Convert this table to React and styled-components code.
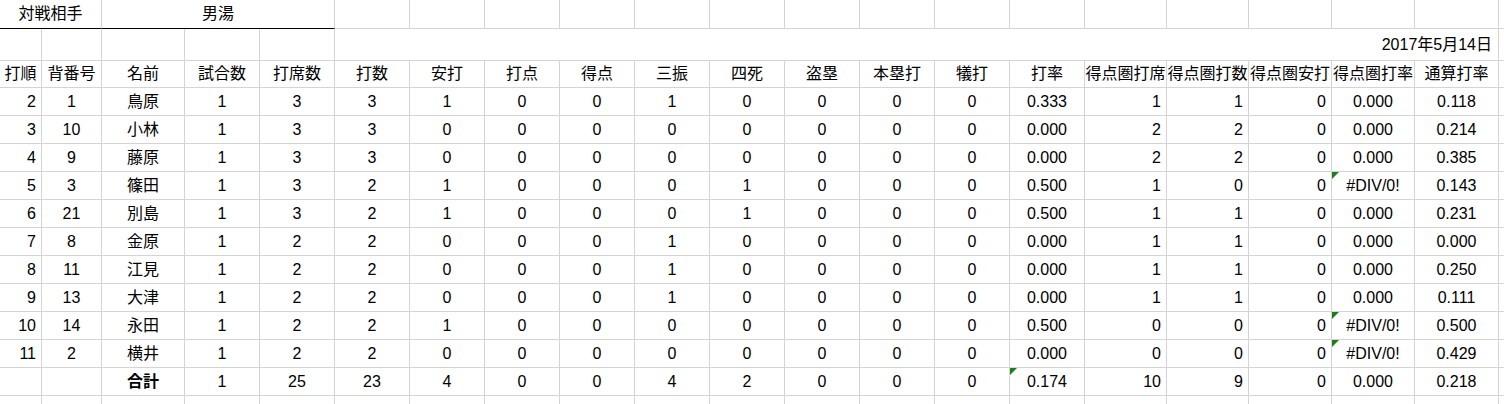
import React from "react";
import styled, { createGlobalStyle } from "styled-components";

const GlobalStyle = createGlobalStyle`
  html, body {
    margin: 0;
    padding: 0;
    background: #ffffff;
    overflow: hidden;
  }
  body {
    font-family: "Liberation Sans", "Noto Sans CJK JP", sans-serif;
    color: #000000;
  }
`;

const GRID = "#d4d4d4";

const Sheet = styled.div`
  display: grid;
  grid-template-columns: 42px 60px 83px repeat(12, 75px) 82px 82px 83px 83px 84px 1fr;
  grid-template-rows: 29px 32px 27px repeat(11, 28px) 20px;
  width: 1504px;
  height: 404px;
  overflow: hidden;
  font-size: 16px;
`;

const Cell = styled.div`
  position: relative;
  display: flex;
  align-items: center;
  justify-content: ${(p) =>
    p.$align === "right" ? "flex-end" : p.$align === "left" ? "flex-start" : "center"};
  padding: ${(p) => (p.$align === "right" ? "0 5px 0 0" : "0")};
  grid-column: ${(p) => (p.$span ? `span ${p.$span}` : "auto")};
  border-right: ${(p) => (p.$noRight ? "none" : `1px solid ${GRID}`)};
  border-bottom: 1px solid ${(p) => (p.$dark ? "#000000" : GRID)};
  border-bottom-width: ${(p) => (p.$noBottom ? "0" : "1px")};
  font-weight: ${(p) => (p.$bold ? 700 : 400)};
  white-space: nowrap;
  overflow: visible;
  box-sizing: border-box;
  line-height: 1;
`;

const DateText = styled.span`
  padding-right: 1px;
`;

const Flag = styled.span`
  position: absolute;
  top: 0;
  left: 0;
  width: 0;
  height: 0;
  border-top: 7px solid #1a7f1a;
  border-right: 7px solid transparent;
`;

const headers = [
  "打順", "背番号", "名前", "試合数", "打席数", "打数", "安打", "打点", "得点", "三振",
  "四死", "盗塁", "本塁打", "犠打", "打率", "得点圏打席", "得点圏打数", "得点圏安打",
  "得点圏打率", "通算打率",
];

const aligns = [
  "right", "center", "center", "center", "center", "center", "center", "center",
  "center", "center", "center", "center", "center", "center", "center",
  "right", "right", "right", "center", "center",
];

const rows = [
  ["2", "1", "鳥原", "1", "3", "3", "1", "0", "0", "1", "0", "0", "0", "0", "0.333", "1", "1", "0", "0.000", "0.118"],
  ["3", "10", "小林", "1", "3", "3", "0", "0", "0", "0", "0", "0", "0", "0", "0.000", "2", "2", "0", "0.000", "0.214"],
  ["4", "9", "藤原", "1", "3", "3", "0", "0", "0", "0", "0", "0", "0", "0", "0.000", "2", "2", "0", "0.000", "0.385"],
  ["5", "3", "篠田", "1", "3", "2", "1", "0", "0", "0", "1", "0", "0", "0", "0.500", "1", "0", "0", "#DIV/0!", "0.143"],
  ["6", "21", "別島", "1", "3", "2", "1", "0", "0", "0", "1", "0", "0", "0", "0.500", "1", "1", "0", "0.000", "0.231"],
  ["7", "8", "金原", "1", "2", "2", "0", "0", "0", "1", "0", "0", "0", "0", "0.000", "1", "1", "0", "0.000", "0.000"],
  ["8", "11", "江見", "1", "2", "2", "0", "0", "0", "1", "0", "0", "0", "0", "0.000", "1", "1", "0", "0.000", "0.250"],
  ["9", "13", "大津", "1", "2", "2", "0", "0", "0", "1", "0", "0", "0", "0", "0.000", "1", "1", "0", "0.000", "0.111"],
  ["10", "14", "永田", "1", "2", "2", "1", "0", "0", "0", "0", "0", "0", "0", "0.500", "0", "0", "0", "#DIV/0!", "0.500"],
  ["11", "2", "横井", "1", "2", "2", "0", "0", "0", "0", "0", "0", "0", "0", "0.000", "0", "0", "0", "#DIV/0!", "0.429"],
  ["", "", "合計", "1", "25", "23", "4", "0", "0", "4", "2", "0", "0", "0", "0.174", "10", "9", "0", "0.000", "0.218"],
];

// cells with the green error marker in the corner
const flags = new Set(["3-18", "8-18", "9-18", "10-14"]);

const App = () => {
  return (
    <>
      <GlobalStyle />
      <Sheet>
        {/* row 1: opponent */}
        <Cell $span={2} $dark>対戦相手</Cell>
        <Cell $span={3} $dark>男湯</Cell>
        {Array.from({ length: 16 }).map((_, i) => (
          <Cell key={`r1-${i}`} $noRight={i === 15} />
        ))}

        {/* row 2: date */}
        {Array.from({ length: 5 }).map((_, i) => (
          <Cell key={`r2-${i}`} />
        ))}
        <Cell $span={15} $align="right">
          <DateText>2017年5月14日</DateText>
        </Cell>
        <Cell $noRight />

        {/* row 3: headers */}
        {headers.map((h) => (
          <Cell key={h}>{h}</Cell>
        ))}
        <Cell $noRight />

        {/* data rows */}
        {rows.map((row, r) => (
          <React.Fragment key={`row-${r}`}>
            {row.map((v, c) => (
              <Cell key={c} $align={aligns[c]} $bold={v === "合計"}>
                {flags.has(`${r}-${c}`) && <Flag />}
                {v}
              </Cell>
            ))}
            <Cell $noRight />
          </React.Fragment>
        ))}

        {/* trailing partial row */}
        {Array.from({ length: 21 }).map((_, i) => (
          <Cell key={`tail-${i}`} $noRight={i === 20} $noBottom />
        ))}
      </Sheet>
    </>
  );
};

export default App;
